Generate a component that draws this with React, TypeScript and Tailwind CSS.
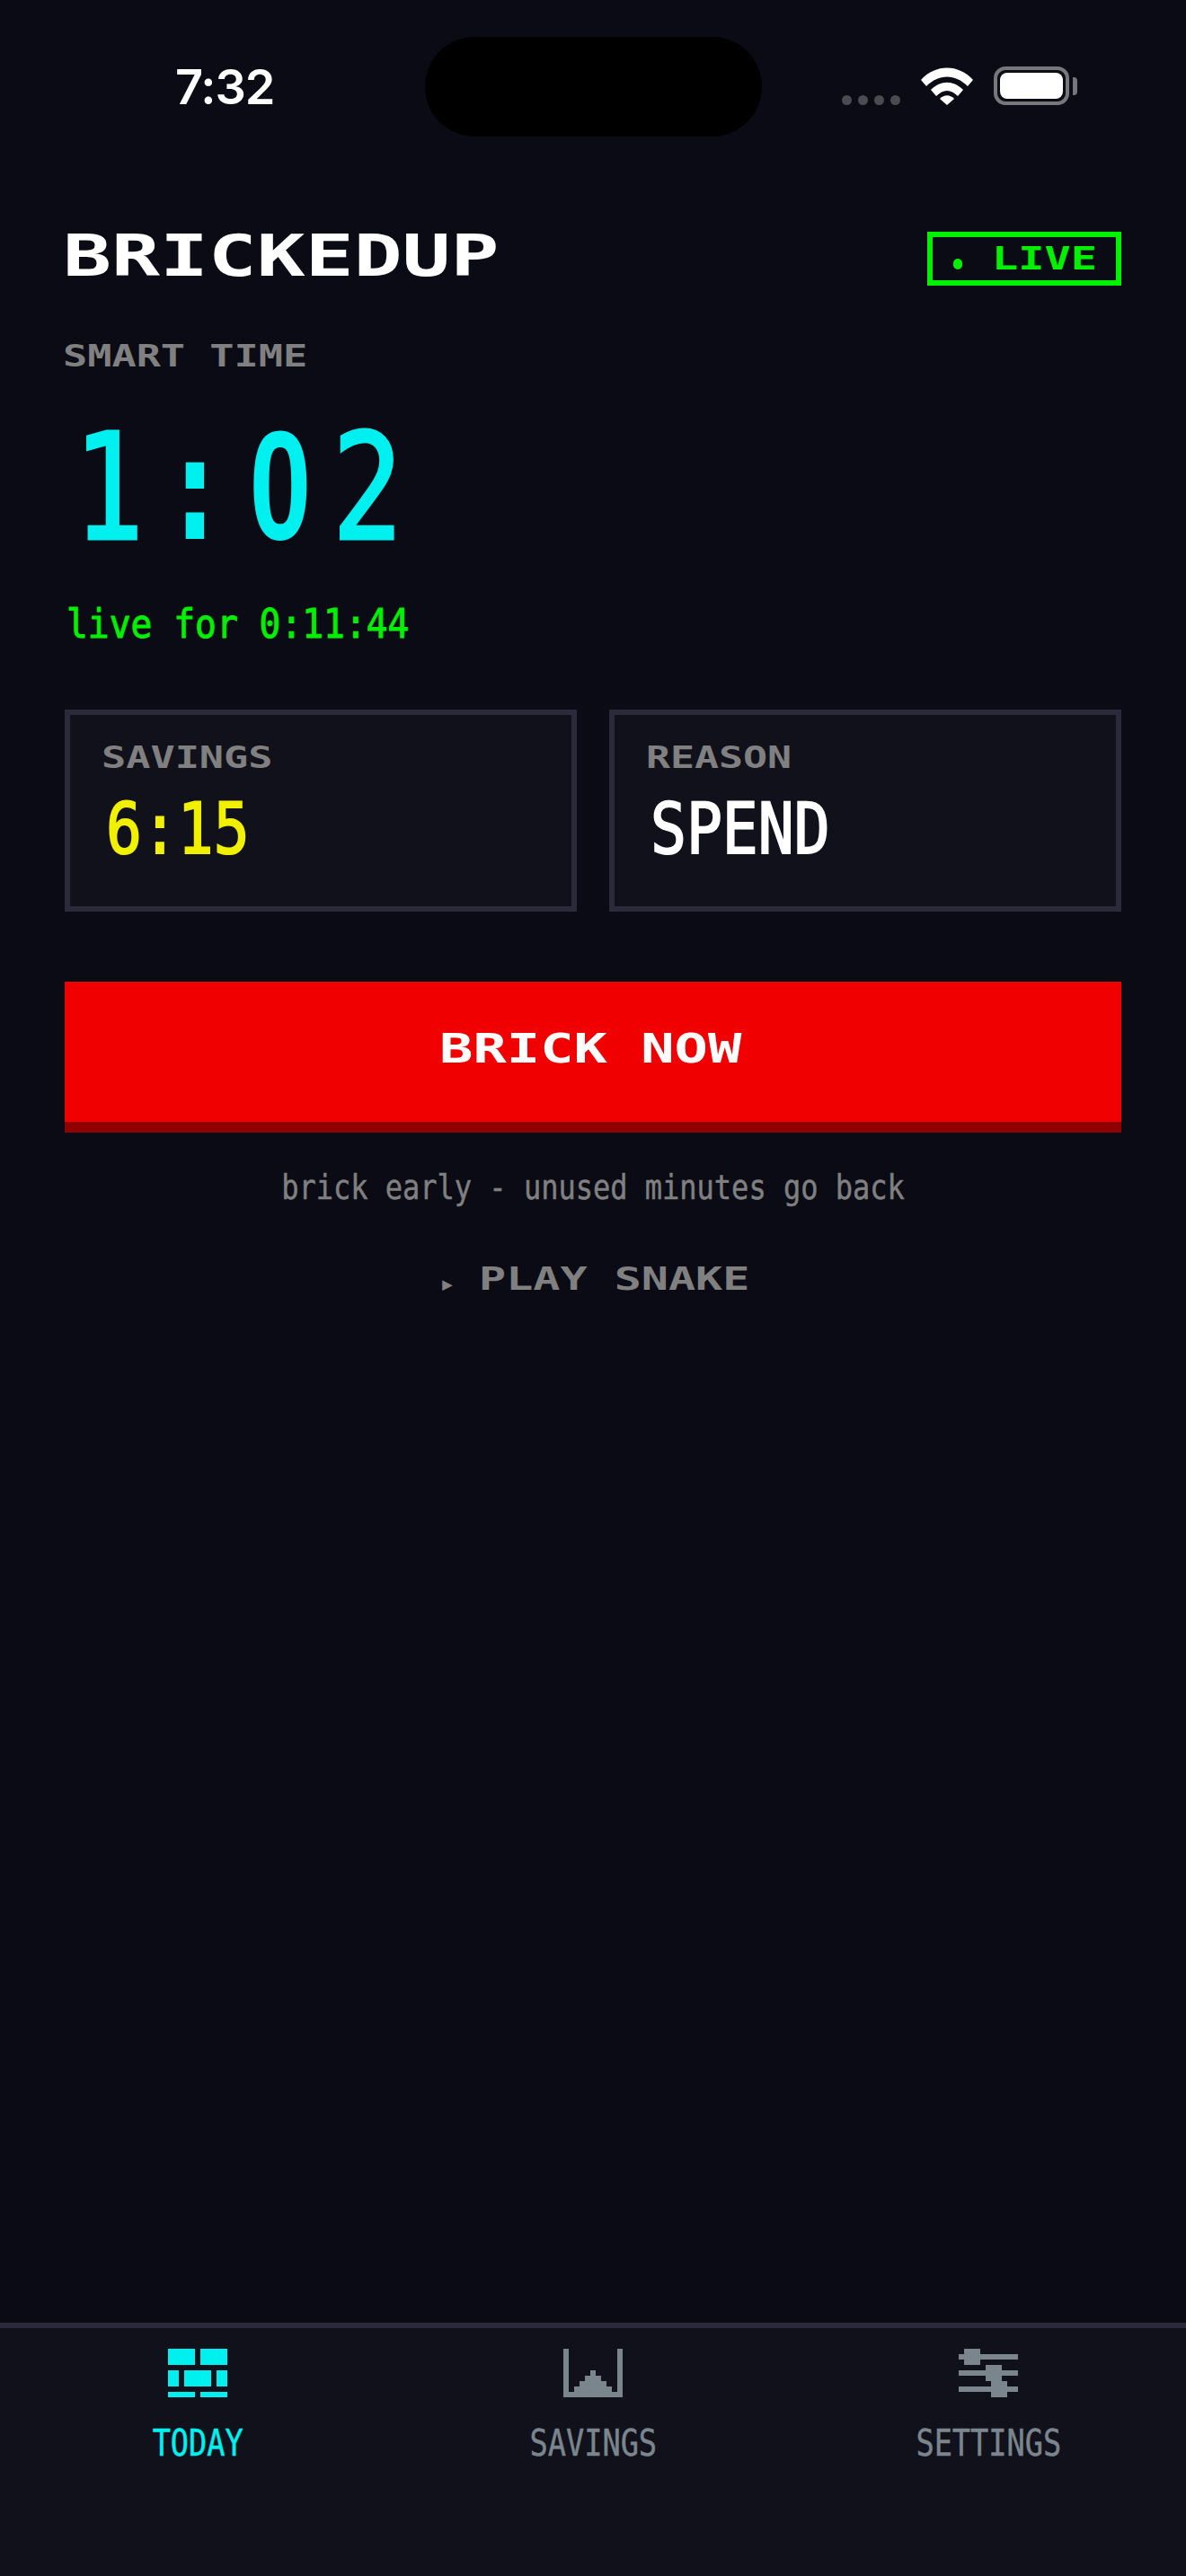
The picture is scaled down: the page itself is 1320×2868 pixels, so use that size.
import React from 'react';

const bricks: number[][] = [
  [0, 0, 5, 3], [6, 0, 5, 3],
  [0, 4, 2, 3], [3, 4, 5, 3], [9, 4, 2, 3],
  [0, 8, 5, 1], [6, 8, 5, 1],
];

const bars: number[][] = [
  [0, 0, 1, 9], [10, 0, 1, 9], [0, 8, 11, 1],
  [2, 7, 1, 1], [3, 6, 1, 2], [4, 5, 1, 3], [5, 4, 1, 4], [6, 5, 1, 3], [7, 6, 1, 2], [8, 7, 1, 1],
];

const sliders: number[][] = [
  [0, 1, 11, 1], [1, 0, 3, 3],
  [0, 4, 11, 1], [5, 3, 3, 3],
  [0, 7, 11, 1], [6, 6, 3, 3],
];

// all nav icons sit on the same 11x9 pixel grid
function PixelIcon({ cells, color }: { cells: number[][]; color: string }) {
  return (
    <svg width="66" height="54" viewBox="0 0 11 9" fill={color} shapeRendering="crispEdges">
      {cells.map(([x, y, w, h], i) => (
        <rect key={i} x={x} y={y} width={w} height={h} />
      ))}
    </svg>
  );
}

function StatusBar() {
  return (
    <div className="flex h-[152px] items-start pt-[41px] text-white">
      <div className="w-[473px] pl-[195px] pt-[29px] font-['Inter',sans-serif] text-[54px] leading-none font-semibold tracking-[-1px]">
        7:32
      </div>
      <div className="h-[111px] w-[375px] rounded-[56px] bg-black" />
      <div className="flex h-[76px] items-end pl-[89px]">
        <div className="flex gap-[7px]">
          <div className="h-[11px] w-[11px] rounded-full bg-[#4b4b52]" />
          <div className="h-[11px] w-[11px] rounded-full bg-[#4b4b52]" />
          <div className="h-[11px] w-[11px] rounded-full bg-[#4b4b52]" />
          <div className="h-[11px] w-[11px] rounded-full bg-[#4b4b52]" />
        </div>
        <svg className="ml-[23px]" width="58" height="42" viewBox="0 0 58 42" fill="white">
          <path d="M0 14 C16 -4 42 -4 58 14 L52 21 C38 7 20 7 6 21 Z" />
          <path d="M11 25 C22 14 36 14 47 25 L41 32 C33 24 25 24 17 32 Z" />
          <path d="M21 35 C26 30 32 30 37 35 L29 42 Z" />
        </svg>
        <div className="ml-[23px] flex items-center">
          <div className="h-[43px] w-[84px] rounded-[13px] border-[4px] border-[#77777b] p-[3px]">
            <div className="h-full w-full rounded-[8px] bg-white" />
          </div>
          <div className="ml-[4px] h-[20px] w-[5px] rounded-r-[4px] bg-[#77777b]" />
        </div>
      </div>
    </div>
  );
}

function Card({ label, value, valueColor, labelScale }: { label: string; value: string; valueColor: string; labelScale: string }) {
  return (
    <div className="h-[225px] border-[6px] border-[#2a2a3a] bg-[#10111a] pl-[35px] pt-[31px]">
      <div className={`origin-left text-[33px] leading-none font-bold whitespace-nowrap text-[#808080] ${labelScale}`}>
        {label}
      </div>
      <div className={`ml-[5px] mt-[24px] origin-left scale-x-[0.85] text-[78px] leading-none whitespace-nowrap [-webkit-text-stroke:2px] ${valueColor}`}>
        {value}
      </div>
    </div>
  );
}

function NavItem({ label, cells, active }: { label: string; cells: number[][]; active?: boolean }) {
  return (
    <div className="flex flex-col items-center pt-[23px]">
      <PixelIcon cells={cells} color={active ? '#00f0f0' : '#7b858d'} />
      <div
        className={`mt-[31px] scale-x-[0.84] text-[40px] leading-none whitespace-nowrap [-webkit-text-stroke:0.5px] ${
          active ? 'text-[#00f0f0]' : 'text-[#7b858d]'
        }`}
      >
        {label}
      </div>
    </div>
  );
}

export default function App() {
  return (
    <div className="flex h-[2868px] w-[1320px] flex-col overflow-hidden bg-[#0a0b14] font-['DejaVu_Sans_Mono',monospace]">
      <StatusBar />

      <main className="flex flex-1 flex-col px-[72px]">
        {/* Header */}
        <div className="mt-[106px] flex h-[60px] items-center justify-between">
          <div className="-ml-[2px] origin-left scale-x-[1.4] pb-[6px] text-[64px] leading-none font-bold whitespace-nowrap text-white">
            BRICKEDUP
          </div>
          <div className="flex h-[60px] w-[216px] items-center border-[6px] border-[#00f000] pl-[23px]">
            <div className="mt-[12px] h-[12px] w-[10px] rounded-full bg-[#00f000]" />
            <div className="ml-[33px] origin-left scale-x-[1.35] text-[36px] leading-none font-bold text-[#00f000]">
              LIVE
            </div>
          </div>
        </div>

        {/* Smart time */}
        <div className="-ml-[2px] mt-[62px] origin-left scale-x-[1.37] text-[33px] leading-none font-bold whitespace-nowrap text-[#808080]">
          SMART TIME
        </div>
        <div className="mt-[41px] flex items-end text-[164px] leading-none text-[#00f0f0]">
          <div className="w-[96px] scale-x-[0.8] text-center [-webkit-text-stroke:3px]">1</div>
          <div className="w-[96px] scale-x-[0.76] text-center font-bold">:</div>
          <div className="w-[96px] scale-x-[0.72] text-center font-['Liberation_Sans',sans-serif] text-[172px] font-bold">0</div>
          <div className="w-[96px] scale-x-[0.8] text-center [-webkit-text-stroke:3px]">2</div>
        </div>
        <div className="ml-[2px] mt-[46px] origin-left scale-x-[0.88] text-[45px] leading-none whitespace-nowrap text-[#00f000] [-webkit-text-stroke:1px]">
          live for 0:11:44
        </div>

        {/* Stats */}
        <div className="mt-[73px] grid grid-cols-2 gap-[36px]">
          <Card label="SAVINGS" value="6:15" valueColor="text-[#f0f000]" labelScale="scale-x-[1.37]" />
          <Card label="REASON" value="SPEND" valueColor="text-white" labelScale="scale-x-[1.36]" />
        </div>

        <div className="mt-[78px] flex h-[168px] items-center justify-center border-b-[12px] border-[#900000] bg-[#f00000] pb-[6px] pr-[6px]">
          <div className="scale-x-[1.41] text-[44px] leading-none font-bold whitespace-nowrap text-white">
            BRICK NOW
          </div>
        </div>

        <div className="mt-[43px] text-center">
          <div className="inline-block scale-x-[0.865] text-[37px] leading-none whitespace-nowrap text-[#808080] [-webkit-text-stroke:0.5px]">
            brick early - unused minutes go back
          </div>
        </div>

        <div className="mt-[62px] flex items-center justify-center">
          <div className="mt-[10px] text-[30px] leading-none text-[#808080]">▸</div>
          <div className="ml-[26px] w-[298px]">
            <div className="origin-left scale-x-[1.39] text-[36px] leading-none font-bold whitespace-nowrap text-[#808080]">
              PLAY SNAKE
            </div>
          </div>
        </div>
      </main>

      {/* Tabs */}
      <nav className="grid h-[282px] grid-cols-3 border-t-[6px] border-[#2a2a3a] bg-[#10111a]">
        <NavItem label="TODAY" cells={bricks} active />
        <NavItem label="SAVINGS" cells={bars} />
        <NavItem label="SETTINGS" cells={sliders} />
      </nav>
    </div>
  );
}
